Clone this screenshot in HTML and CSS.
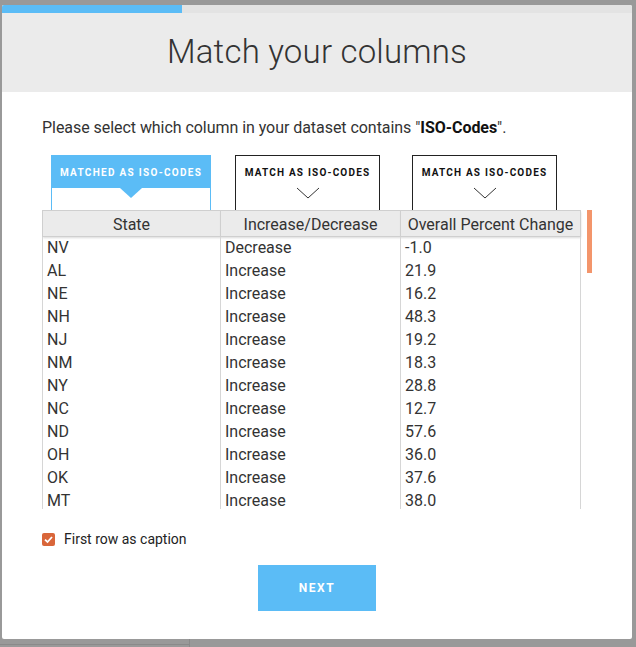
FILE: index.html
```html
<!DOCTYPE html>
<html>
<head>
<meta charset="utf-8">
<link rel="stylesheet" href="styles.css">
</head>
<body>
<div class="backdrop-line bottom-line"></div>
<div class="backdrop-line vert-line"></div>
<div class="modal">
  <div class="progress"><div class="progress-bar"></div></div>
  <div class="header"><h1 class="title">Match your columns</h1></div>
  <div class="content">
    <p class="instr">Please select which column in your dataset contains "<b>ISO-Codes</b>".</p>
    <div class="matchers">
      <div class="matcher matched matcher-1">
        <div class="matched-head">MATCHED AS ISO-CODES</div>
        <div class="arrow-down"></div>
      </div>
      <div class="matcher matcher-2">
        <div class="matcher-label">MATCH AS ISO-CODES</div>
        <svg class="chevron" width="24" height="12" viewBox="0 0 24 12"><path d="M1 1 L12 11 L23 1" fill="none" stroke="#333" stroke-width="1"/></svg>
      </div>
      <div class="matcher matcher-3">
        <div class="matcher-label">MATCH AS ISO-CODES</div>
        <svg class="chevron" width="24" height="12" viewBox="0 0 24 12"><path d="M1 1 L12 11 L23 1" fill="none" stroke="#333" stroke-width="1"/></svg>
      </div>
    </div>
    <div class="table-wrap">
      <table class="data">
        <thead>
          <tr><th class="c1">State</th><th class="c2">Increase/Decrease</th><th class="c3">Overall Percent Change</th></tr>
        </thead>
        <tbody>
          <tr><td>NV</td><td>Decrease</td><td>-1.0</td></tr>
          <tr><td>AL</td><td>Increase</td><td>21.9</td></tr>
          <tr><td>NE</td><td>Increase</td><td>16.2</td></tr>
          <tr><td>NH</td><td>Increase</td><td>48.3</td></tr>
          <tr><td>NJ</td><td>Increase</td><td>19.2</td></tr>
          <tr><td>NM</td><td>Increase</td><td>18.3</td></tr>
          <tr><td>NY</td><td>Increase</td><td>28.8</td></tr>
          <tr><td>NC</td><td>Increase</td><td>12.7</td></tr>
          <tr><td>ND</td><td>Increase</td><td>57.6</td></tr>
          <tr><td>OH</td><td>Increase</td><td>36.0</td></tr>
          <tr><td>OK</td><td>Increase</td><td>37.6</td></tr>
          <tr><td>MT</td><td>Increase</td><td>38.0</td></tr>
        </tbody>
      </table>
      <div class="scroll-thumb"></div>
    </div>
    <label class="check-row">
      <span class="checkbox"><svg width="13" height="13" viewBox="0 0 13 13"><path d="M3 6.6 L5.5 9 L10 4" fill="none" stroke="#fff" stroke-width="1.8"/></svg></span>
      <span class="check-label">First row as caption</span>
    </label>
    <div class="actions"><button class="next">NEXT</button></div>
  </div>
</div>
</body>
</html>
```
FILE: styles.css
```css
html, body {
  margin: 0;
  padding: 0;
}
body {
  background: #999999;
  width: 636px;
  height: 647px;
  overflow: hidden;
  position: relative;
  font-family: Roboto, "Liberation Sans", sans-serif;
  color: #333;
}
.backdrop-line {
  position: absolute;
  background: #8a8a8a;
}
.bottom-line {
  left: 0;
  top: 644px;
  width: 190px;
  height: 1px;
}
.vert-line {
  left: 189px;
  top: 639px;
  width: 1px;
  height: 8px;
}
.modal {
  position: absolute;
  left: 2px;
  top: 5px;
  width: 630px;
  height: 634px;
  background: #fff;
  border-radius: 2px;
  overflow: hidden;
}
.progress {
  height: 8px;
  background: #e3e3e3;
}
.progress-bar {
  width: 180px;
  height: 8px;
  background: #5bbcf6;
}
.header {
  height: 79px;
  background: #ebebeb;
  display: flex;
  align-items: center;
  justify-content: center;
}
.title {
  margin: 0;
  font-size: 33px;
  font-weight: 300;
  color: #333;
  letter-spacing: 0.2px;
  padding-bottom: 2px;
}
.content {
  padding: 0 40px;
}
.instr {
  margin: 26px 0 0;
  font-size: 16px;
  line-height: 20px;
  color: #333;
  letter-spacing: -0.05px;
}
.instr b {
  font-weight: 700;
  color: #111;
}
.matchers {
  display: flex;
  height: 55px;
  margin-top: 17px;
}
.matcher {
  box-sizing: border-box;
  height: 56px;
  border: 1px solid #222;
  border-bottom: none;
  display: flex;
  flex-direction: column;
  align-items: center;
  background: #fff;
}
.matcher-1 {
  width: 160px;
  margin-left: 9px;
  border-color: #5bbcf6;
  position: relative;
}
.matcher-2 {
  width: 145px;
  margin-left: 24px;
}
.matcher-3 {
  width: 145px;
  margin-left: 32px;
}
.matched-head {
  width: 100%;
  height: 32px;
  background: #5bbcf6;
  color: #fff;
  font-size: 10px;
  font-weight: 700;
  letter-spacing: 1.3px;
  display: flex;
  align-items: center;
  justify-content: center;
}
.arrow-down {
  width: 0;
  height: 0;
  border-left: 11px solid transparent;
  border-right: 11px solid transparent;
  border-top: 10px solid #5bbcf6;
}
.matcher-label {
  margin-top: 11px;
  font-size: 10px;
  font-weight: 700;
  letter-spacing: 1.2px;
  color: #111;
  line-height: 12px;
}
.chevron {
  margin-top: 8px;
  display: block;
}
.table-wrap {
  position: relative;
  height: 299px;
  width: 560px;
  overflow: hidden;
}
.data {
  width: 538px;
  border-collapse: collapse;
  table-layout: fixed;
  font-size: 16px;
  color: #333;
}
.data th {
  height: 26px;
  box-sizing: border-box;
  padding: 1px 0 0;
  background: #ebebeb;
  border: 1px solid #cfcfcf;
  font-weight: 400;
  color: #333;
  text-align: center;
  box-shadow: 0 1px 2px rgba(0,0,0,0.15);
}
.data th.c1 { width: 178px; }
.data th.c2 { width: 180px; }
.data th.c3 { width: 180px; }
.data td {
  height: 21px;
  padding: 0 0 2px 4px;
  line-height: 21px;
  border-left: 1px solid #d6d6d6;
  border-right: 1px solid #d6d6d6;
  white-space: nowrap;
}
.scroll-thumb {
  position: absolute;
  left: 545px;
  top: -1px;
  width: 5px;
  height: 64px;
  background: #f3956b;
}
.check-row {
  display: flex;
  align-items: center;
  margin-top: 22px;
  height: 16px;
}
.checkbox {
  width: 13px;
  height: 13px;
  border-radius: 2px;
  background: #d9663a;
  display: inline-block;
}
.checkbox svg { display: block; }
.check-label {
  margin-left: 9px;
  font-size: 14px;
  color: #222;
}
.actions {
  display: flex;
  justify-content: center;
  margin-top: 18px;
}
.next {
  width: 118px;
  height: 46px;
  border: none;
  background: #5bbcf6;
  color: #fff;
  font-family: Roboto, "Liberation Sans", sans-serif;
  font-size: 12px;
  font-weight: 700;
  letter-spacing: 1.5px;
  padding: 0;
}
```
